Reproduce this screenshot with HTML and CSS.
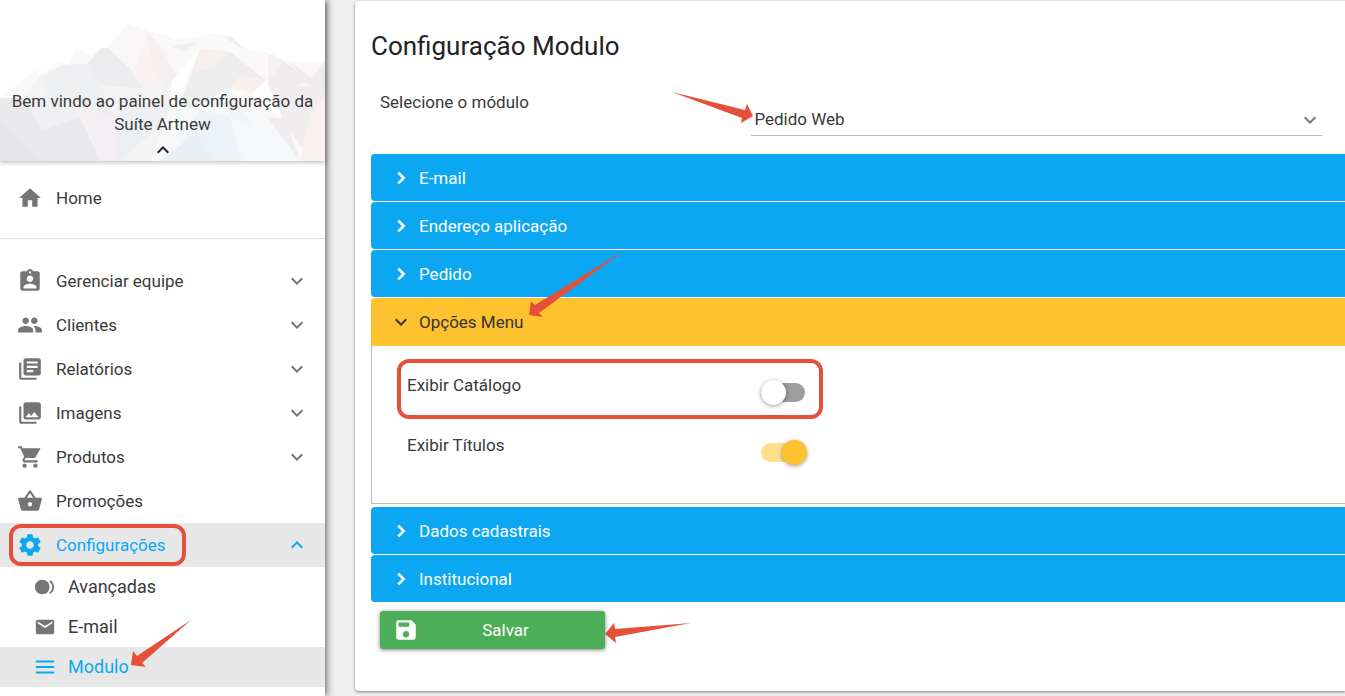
FILE: index.html
```html
<!DOCTYPE html>
<html lang="pt-BR">
<head>
<meta charset="utf-8">
<meta name="viewport" content="width=device-width, initial-scale=1">
<title>Configuração Modulo</title>
<link rel="stylesheet" href="styles.css">
</head>
<body>
<svg class="symbols" aria-hidden="true">
  <symbol id="down" viewBox="0 0 24 24"><path d="M7.41 8.59 12 13.17l4.59-4.58L18 10l-6 6-6-6z"/></symbol>
  <symbol id="up" viewBox="0 0 24 24"><path d="M7.41 15.41 12 10.83l4.59 4.58L18 14l-6-6-6 6z"/></symbol>
  <symbol id="right" viewBox="0 0 24 24"><path d="M6.500 5.200 9.300 2.500 18.800 12l-9.500 9.500-2.800-2.700L13.300 12z"/></symbol>
</svg>
<div class="app">
  <aside class="sidebar">
    <header class="profile">
      <svg class="mountains" viewBox="0 0 975 483" preserveAspectRatio="none" aria-hidden="true">
        <path fill="#faf8f9" d="M0 295 105 210 125 225 170 185 205 192 232 145 275 165 300 145 325 140 385 70 445 95 500 105 525 118 590 112 635 98 685 108 730 140 820 165 870 185 975 185V483H0z"/>
        <path fill="#f3f3f4" d="M120 228 190 195 265 192 305 144 325 144 385 180 440 250 520 245 480 483H0V295L75 295z"/>
        <path fill="#ececee" d="M305 144 325 144 390 205 425 265 300 255 262 192z"/>
        <path fill="#eeeff1" d="M120 228 190 195 262 192 300 255 350 360 240 320 150 290z"/>
        <path fill="#f8f2f2" d="M445 95 400 205 440 262 515 245 500 160z"/>
        <path fill="#f5eff0" d="M445 95 530 225 500 260 455 200z"/>
        <path fill="#f9f7f8" d="M385 70 445 95 400 215 325 144z"/>
        <path fill="#efeff0" d="M530 135 592 125 555 155 515 140z"/>
        <path fill="#f6efee" d="M600 145 690 155 645 200 575 215z"/>
        <path fill="#eeedee" d="M690 155 800 243 725 225 640 203z"/>
        <path fill="#eeeeef" d="M575 215 640 203 725 225 690 265 590 340 545 300z"/>
        <path fill="#f7f0ef" d="M725 225 800 243 820 320 755 280 690 262z"/>
        <path fill="#fdfefe" d="M600 145 575 205 545 275 510 330 515 245z"/>
        <path fill="#f1eff0" d="M670 110 695 108 730 148z"/>
        <path fill="#eeeced" d="M820 165 935 240 875 260 805 245z"/>
        <path fill="#f7f0f1" d="M805 165 820 165 850 190 805 243z"/>
        <path fill="#f0ecee" d="M870 185 935 235 975 180V290L930 260z"/>
        <path fill="#fff" d="M755 280 800 240 840 330 855 350 790 325z"/>
        <path fill="#f0edee" d="M800 245 935 260 975 290V440L935 483 860 380z"/>
        <path fill="#f8f1f0" d="M930 345 975 290V483H900z"/>
        <path fill="#e9e9ec" d="M0 295 75 295 125 350 240 350 300 483H0z"/>
        <path fill="#e6e6e9" d="M0 365 130 483H0z"/>
        <path fill="#f0eff1" d="M75 295 150 285 240 350 125 390z"/>
        <path fill="#f4eff2" d="M240 325 350 360 380 483H300z"/>
        <path fill="#edeff2" d="M350 350 460 300 510 330 455 400 355 483z"/>
        <path fill="#f7f8fa" d="M510 330 600 320 680 262 800 350 895 483H450z"/>
        <path fill="#edf2f6" d="M600 330 690 350 725 483H520z"/>
        <path fill="#f1f5f8" d="M680 262 760 380 690 350z"/>
        <path fill="#e9f0f4" d="M590 400 640 483H480z"/>
        <path fill="#f0edf0" d="M800 350 855 355 900 483z"/>
      </svg>
      <p class="welcome">Bem vindo ao painel de configuração da Suíte Artnew</p>
      <button class="collapse" aria-label="Recolher"><svg class="chev"><use href="#up"/></svg></button>
    </header>
    <nav>
      <div class="group home">
        <a class="item" href="#"><svg class="icon" viewBox="0 0 24 24"><path d="M10 20v-6h4v6h5v-8h3L12 3 2 12h3v8z"/></svg>Home</a>
      </div>
      <div class="group">
        <button class="item"><svg class="icon" viewBox="0 0 24 24"><path d="M19 3h-4.180C14.400 1.840 13.300 1 12 1c-1.300 0-2.400.840-2.820 2H5c-1.100 0-2 .9-2 2v14c0 1.100.9 2 2 2h14c1.100 0 2-.9 2-2V5c0-1.100-.9-2-2-2zm-7 0c.55 0 1 .45 1 1s-.45 1-1 1-1-.45-1-1 .45-1 1-1zm0 4c1.660 0 3 1.340 3 3s-1.340 3-3 3-3-1.340-3-3 1.340-3 3-3zm6 12H6v-1.400c0-2 4-3.100 6-3.100s6 1.100 6 3.100V19z"/></svg>Gerenciar equipe<svg class="chev"><use href="#down"/></svg></button>
        <button class="item"><svg class="icon" viewBox="0 0 24 24"><path d="M16 11c1.660 0 2.990-1.340 2.990-3S17.660 5 16 5s-3 1.340-3 3 1.340 3 3 3zm-8 0c1.660 0 2.990-1.340 2.990-3S9.660 5 8 5 5 6.340 5 8s1.340 3 3 3zm0 2c-2.330 0-7 1.170-7 3.500V19h14v-2.500C15 14.170 10.330 13 8 13zm8 0c-.29 0-.62.020-.97.050 1.160.840 1.970 1.970 1.970 3.450V19h6v-2.500c0-2.330-4.670-3.500-7-3.500z"/></svg>Clientes<svg class="chev"><use href="#down"/></svg></button>
        <button class="item"><svg class="icon" viewBox="0 0 24 24"><path d="M4 6H2v14c0 1.100.9 2 2 2h14v-2H4V6zm16-4H8c-1.100 0-2 .9-2 2v12c0 1.100.9 2 2 2h12c1.100 0 2-.9 2-2V4c0-1.100-.9-2-2-2zm-1 9H9V9h10v2zm-4 4H9v-2h6v2zm4-8H9V5h10v2z"/></svg>Relatórios<svg class="chev"><use href="#down"/></svg></button>
        <button class="item"><svg class="icon" viewBox="0 0 24 24"><path d="M22 16V4c0-1.100-.9-2-2-2H8c-1.100 0-2 .9-2 2v12c0 1.100.9 2 2 2h12c1.100 0 2-.9 2-2zm-11-4 2.030 2.710L16 11l4 5H8l3-4zM2 6v14c0 1.100.9 2 2 2h14v-2H4V6H2z"/></svg>Imagens<svg class="chev"><use href="#down"/></svg></button>
        <button class="item"><svg class="icon" viewBox="0 0 24 24"><path d="M7 18c-1.100 0-1.990.9-1.990 2S5.900 22 7 22s2-.9 2-2-.9-2-2-2zM1 2v2h2l3.600 7.590-1.350 2.450c-.16.280-.25.610-.25.960 0 1.100.9 2 2 2h12v-2H7.420c-.14 0-.25-.11-.25-.25l.03-.12.9-1.630h7.450c.75 0 1.410-.41 1.750-1.030L21.700 4H5.210l-.94-2H1zm16 16c-1.100 0-1.990.9-1.990 2s.89 2 1.990 2 2-.9 2-2-.9-2-2-2z"/></svg>Produtos<svg class="chev"><use href="#down"/></svg></button>
        <a class="item" href="#"><svg class="icon" viewBox="0 0 24 24"><path d="M17.210 9l-4.380-6.560c-.19-.28-.51-.42-.83-.42-.32 0-.64.140-.83.430L6.790 9H2c-.55 0-1 .45-1 1 0 .09.010.18.040.27l2.540 9.270c.23.840 1 1.460 1.920 1.460h13c.92 0 1.690-.62 1.930-1.460l2.540-9.270L23 10c0-.55-.45-1-1-1h-4.790zM9 9l3-4.400L15 9H9zm3 8c-1.100 0-2-.9-2-2s.9-2 2-2 2 .9 2 2-.9 2-2 2z"/></svg>Promoções</a>
        <button class="item active" aria-expanded="true"><svg class="icon" viewBox="0 0 24 24"><path d="M19.430 12.980c.04-.32.070-.64.070-.98s-.03-.66-.07-.98l2.110-1.650c.19-.15.240-.42.120-.64l-2-3.460c-.12-.22-.39-.3-.61-.22l-2.490 1c-.52-.4-1.080-.73-1.690-.98l-.38-2.650C14.460 2.180 14.250 2 14 2h-4c-.25 0-.46.180-.49.420l-.38 2.650c-.61.250-1.170.59-1.690.98l-2.490-1c-.23-.09-.49 0-.61.220l-2 3.460c-.13.220-.07.490.12.640l2.110 1.650c-.04.320-.07.650-.07.980s.03.660.07.980l-2.110 1.650c-.19.150-.24.420-.12.640l2 3.460c.12.220.39.300.61.220l2.490-1c.52.400 1.080.73 1.690.98l.38 2.650c.03.240.24.420.49.420h4c.25 0 .46-.18.490-.42l.38-2.650c.61-.25 1.170-.59 1.690-.98l2.490 1c.23.090.49 0 .61-.22l2-3.460c.12-.22.070-.49-.12-.64l-2.110-1.650zM12 15.500c-1.930 0-3.500-1.570-3.500-3.500s1.570-3.500 3.500-3.500 3.500 1.570 3.500 3.500-1.570 3.500-3.500 3.500z"/></svg>Configurações<svg class="chev"><use href="#up"/></svg><span class="mark mark-config"></span></button>
        <a class="item sub" href="#"><svg class="icon" viewBox="0 0 24 24"><circle cx="9" cy="12" r="8"/><path d="M17 4.300v2.200c1.800 1.100 3 3.100 3 5.500s-1.200 4.400-3 5.500v2.200c2.900-1.200 5-4.200 5-7.700s-2.100-6.500-5-7.700z"/></svg>Avançadas</a>
        <a class="item sub" href="#"><svg class="icon" viewBox="0 0 24 24"><path d="M20 4H4c-1.100 0-1.990.9-1.990 2L2 18c0 1.100.9 2 2 2h16c1.100 0 2-.9 2-2V6c0-1.100-.9-2-2-2zm0 4-8 5-8-5V6l8 5 8-5v2z"/></svg>E-mail</a>
        <a class="item sub active" href="#"><svg class="icon" viewBox="0 0 24 24"><path d="M2 5h20v2.200H2zm0 5.900h20v2.200H2zm0 5.900h20V19H2z"/></svg>Modulo
          <svg class="arrow arrow-modulo" viewBox="0 0 60 48"><path d="M60 0 11 43 15 47 0 45 2 31 6 36z"/></svg></a>
      </div>
    </nav>
  </aside>

  <main class="card">
    <h1>Configuração Modulo</h1>
    <div class="field">
      <label for="modulo">Selecione o módulo</label>
      <div class="select">
        <select id="modulo"><option>Pedido Web</option></select>
        <svg class="chev"><use href="#down"/></svg>
        <svg class="arrow arrow-select" viewBox="0 0 82 32"><path d="M0 0 73 18 75 12 81 24 69 31 70 26z"/></svg>
      </div>
    </div>

    <div class="accordion">
      <button class="head"><svg class="caret"><use href="#right"/></svg>E-mail</button>
      <button class="head"><svg class="caret"><use href="#right"/></svg>Endereço aplicação</button>
      <button class="head"><svg class="caret"><use href="#right"/></svg>Pedido</button>
      <section class="open">
        <button class="head" aria-expanded="true"><svg class="chev"><use href="#down"/></svg>Opções Menu
          <svg class="arrow arrow-menu" viewBox="0 0 96 68"><path d="M96 0 10 63 14 67 0 65 2 51 6 55z"/></svg></button>
        <div class="panel">
          <div class="option">
            <label for="catalogo">Exibir Catálogo</label>
            <input class="switch" type="checkbox" role="switch" id="catalogo">
            <span class="mark mark-option"></span>
          </div>
          <div class="option">
            <label for="titulos">Exibir Títulos</label>
            <input class="switch" type="checkbox" role="switch" id="titulos" checked>
          </div>
        </div>
      </section>
      <button class="head"><svg class="caret"><use href="#right"/></svg>Dados cadastrais</button>
      <button class="head"><svg class="caret"><use href="#right"/></svg>Institucional</button>
    </div>

    <button class="save"><svg class="icon" viewBox="0 0 24 24"><path d="M17 3H5c-1.110 0-2 .9-2 2v14c0 1.100.89 2 2 2h14c1.100 0 2-.9 2-2V7l-4-4zm-5 16c-1.660 0-3-1.340-3-3s1.340-3 3-3 3 1.340 3 3-1.340 3-3 3zm3-10H5V5h10v4z"/></svg><span>Salvar</span>
      <svg class="arrow arrow-save" viewBox="0 0 86 20"><path d="M86 0 10 6 9 0 0 11 11 20 10 14z"/></svg></button>
  </main>
</div>
</body>
</html>
```
FILE: styles.css
```css
* { box-sizing: border-box; }

body {
  margin: 0;
  background: #f0f0f0;
  color: #3a3a3a;
  font: 17px/22px Roboto, "Noto Sans", sans-serif;
  overflow: hidden;
}

button, select { font: inherit; color: inherit; }
button { border: 0; background: none; padding: 0; cursor: pointer; text-align: left; }
a { color: inherit; text-decoration: none; }
svg { fill: currentColor; flex: none; }

.symbols { position: absolute; width: 0; height: 0; }
.chev { width: 24px; height: 24px; }
.icon { width: 26px; height: 26px; }

.app { display: flex; gap: 30px; min-height: 100vh; align-items: flex-start; }

/* Sidebar */
.sidebar {
  flex: none;
  align-self: stretch;
  width: 325px;
  background: #fff;
  box-shadow: 1px 0 8px rgba(0, 0, 0, .65);
}

.profile {
  position: relative;
  display: flex;
  flex-direction: column;
  align-items: center;
  padding: 90px 8px 0;
  height: 161px;
  box-shadow: 0 1px 5px rgba(0, 0, 0, .3);
}
.mountains { position: absolute; inset: 0; width: 100%; height: 100%; }
.welcome { position: relative; margin: 0; line-height: 23px; text-align: center; }
.collapse { position: relative; height: 24px; margin-top: 2px; color: #222; }

.group { padding: 20px 0 8px; }
.home { padding: 15px 0 18px; border-bottom: 1px solid #ddd; }

.item {
  position: relative;
  display: flex;
  align-items: center;
  width: 100%;
  height: 44px;
  padding: 0 16px 0 17px;
  gap: 13px;
}
.item .icon { color: #757575; }
.item .chev { margin-left: auto; color: #757575; }
.item.active { background: #e7e7e7; color: #0ca7f2; }
.item.active .icon, .item.active .chev { color: #0ca7f2; }
.item.sub { height: 40px; padding-left: 34px; gap: 12px; font-size: 18px; }
.sub .icon { width: 22px; height: 22px; }

/* Card */
.card {
  flex: 1;
  min-width: 0;
  margin-top: 1px;
  padding: 28px 0 42px 16px;
  background: #fff;
  border-radius: 4px 0 0 4px;
  box-shadow: 0 1px 3px rgba(0, 0, 0, .5);
}
h1 { margin: 0; font-size: 26px; line-height: 34px; font-weight: 400; color: #222; }

.field {
  display: grid;
  grid-template-columns: 40% 1fr;
  align-items: start;
  padding: 28px 23px 18px 0;
}
.field label { padding-left: 9px; }
.select { position: relative; margin-top: 12px; border-bottom: 1px solid #bbb; }
.select select {
  display: block;
  width: 100%;
  height: 32px;
  padding: 0 30px 0 3px;
  border: 0;
  background: none;
  appearance: none;
}
.select .chev { position: absolute; right: 0; top: 5px; color: #757575; pointer-events: none; }

.accordion { display: flex; flex-direction: column; gap: 1px; }
.head {
  position: relative;
  display: flex;
  align-items: center;
  gap: 6px;
  width: 100%;
  height: 47px;
  padding-left: 18px;
  border-radius: 4px 0 0 4px;
  background: #0ca7f2;
  color: #fff;
}
.caret { width: 24px; height: 16px; }
.open .head { height: 48px; background: #ffc22f; color: #333; border-radius: 4px 0 0 0; }
.panel {
  padding: 28px 0 9px 35px;
  border: solid #bbb;
  border-width: 0 0 1px 1px;
  margin-bottom: 2px;
}
.option {
  position: relative;
  display: flex;
  align-items: flex-start;
  height: 60px;
}
.option label { width: 354px; }

.switch { appearance: none; position: relative; width: 46px; height: 25px; margin: 6px 0 0; cursor: pointer; }
.switch::before {
  content: "";
  position: absolute;
  inset: 3px 2px 3px 0;
  border-radius: 10px;
  background: #9e9e9e;
}
.switch::after {
  content: "";
  position: absolute;
  left: 0;
  top: 0;
  width: 25px;
  height: 25px;
  border-radius: 50%;
  background: #fff;
  box-shadow: 0 1px 4px rgba(0, 0, 0, .4);
}
.switch:checked::before { background: #ffe08a; }
.switch:checked::after { left: auto; right: 0; background: #ffc22f; }

.save {
  position: relative;
  display: flex;
  align-items: center;
  width: 225px;
  height: 38px;
  margin: 9px 0 0 9px;
  padding: 0 13px;
  border-radius: 3px;
  background: #4caf57;
  color: #fff;
  box-shadow: 0 1px 4px rgba(0, 0, 0, .5);
}
.save span { flex: 1; padding-right: 26px; text-align: center; }
.save .icon + span { padding-left: 26px; }

/* Callouts over the interface */
.mark { position: absolute; border: 4px solid #e5503b; border-radius: 12px; pointer-events: none; }
.mark-config { left: 9px; top: 1px; width: 177px; height: 42px; }
.mark-option { left: -10px; top: -15px; width: 426px; height: 60px; }
.arrow { position: absolute; z-index: 2; color: #e5503b; pointer-events: none; }
.arrow-modulo { left: 131px; top: -27px; width: 60px; height: 48px; }
.arrow-select { left: -79px; top: -11px; width: 82px; height: 32px; }
.arrow-menu { left: 158px; top: -48px; width: 96px; height: 68px; }
.arrow-save { left: 225px; top: 12px; width: 86px; height: 20px; }
```
